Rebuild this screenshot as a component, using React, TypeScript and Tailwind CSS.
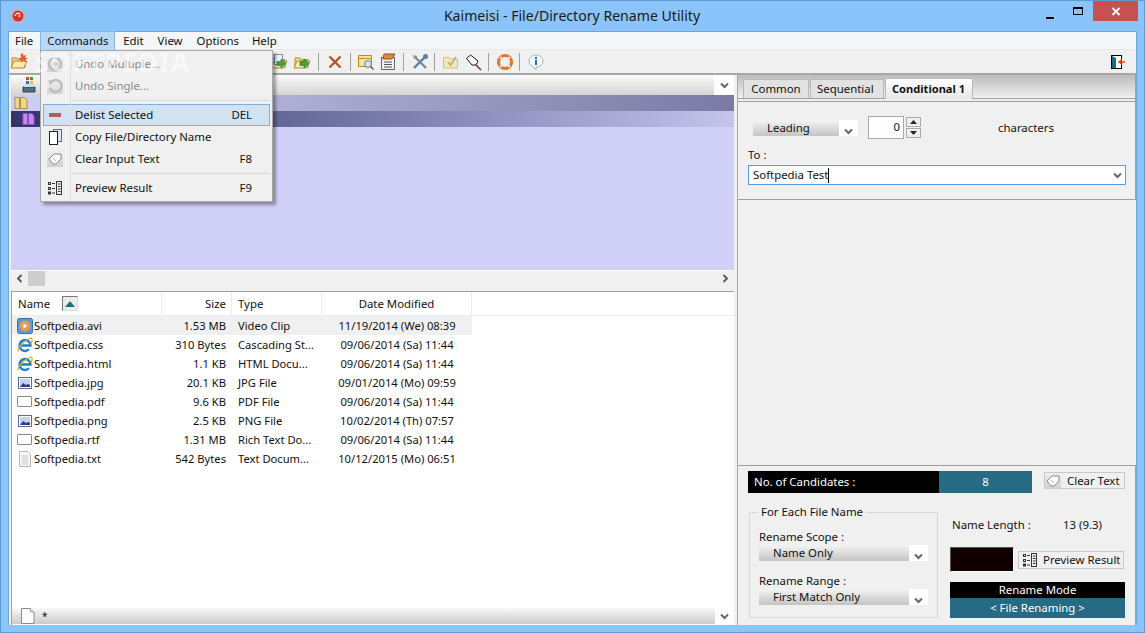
import React from "react";

const F = "font-['Noto_Sans',sans-serif]";

function Chevron({ c = "#666" }: { c?: string }) {
  return (
    <svg width="9" height="7" viewBox="0 0 9 7" className="block">
      <path d="M1 1.500 L4.500 5 L8 1.500" fill="none" stroke={c} strokeWidth="2" />
    </svg>
  );
}

function FolderOpen({ star, arrow, doc }: { star?: boolean; arrow?: boolean; doc?: boolean }) {
  return (
    <svg width="18" height="18" viewBox="0 0 18 18" className="block">
      <path d="M2 5h5l1.500 1.500H15v8H2z" fill="#f4d98a" stroke="#b08a30" />
      <path d="M1 15l3-7h13l-3 7z" fill="#fbe9ae" stroke="#b08a30" />
      {star && <path d="M12.500 0l1 3 3-1.500-1.500 3 3 1-3 1 1 3-3-2-2 2 0-3-3-1 3-1-.5-3z" fill="#ee5a2a" />}
      {doc && <rect x="4.500" y="1.500" width="8" height="10" fill="#eef4fb" stroke="#7e8fa8" />}
      {arrow && <path d="M7 8.500h4V6l5 4.500-5 4.500v-2.500H7z" fill="#3fa535" stroke="#1f6d1c" strokeWidth=".6" />}
    </svg>
  );
}

function Sep({ className }: { className: string }) {
  return <div className={`w-px h-[18px] bg-[#a0a0a0] ${className}`} />;
}

function PreviewIcon() {
  return (
    <svg width="16" height="16" viewBox="0 0 16 16" className="block">
      <g fill="none" stroke="#333">
        <rect x="1.500" y="2.500" width="2" height="2" />
        <rect x="1.500" y="7.500" width="2" height="2" />
        <rect x="1.500" y="12" width="2" height="2" />
        <rect x="9.500" y="1.500" width="5" height="13" fill="#eee" />
      </g>
      <path d="M5 3.500h3M5 8.500h3M5 13h3M11 4h2.500M11 6.500h2.500M11 9h2.500M11 11.500h2.500" stroke="#333" />
    </svg>
  );
}

function EraserIcon() {
  return (
    <span className="flex items-center justify-center w-4 h-4 bg-gradient-to-b from-[#eeeeee] to-[#cfcfcf]">
      <svg width="14" height="12" viewBox="0 0 14 12" className="block">
        <path d="M1 6l5-5h7v5l-5 5H5z" fill="#fbfbfb" stroke="#8a8a8a" />
        <path d="M5 5l3 3" stroke="#b5b5b5" />
      </svg>
    </span>
  );
}

function FileIcon({ kind }: { kind: string }) {
  if (kind === "avi")
    return (
      <svg width="16" height="16" viewBox="0 0 16 16" className="block">
        <rect x=".5" y=".5" width="15" height="15" rx="2" fill="#5a9bd5" stroke="#3a6ea5" />
        <circle cx="8" cy="8" r="5.500" fill="#e39a52" />
        <path d="M6.500 5.500l4 2.500-4 2.500z" fill="#fff" />
      </svg>
    );
  if (kind === "ie")
    return (
      <svg width="16" height="16" viewBox="0 0 16 16" className="block">
        <path d="M3.500 8.500h10a5.500 5.500 0 1 0-1.500 3.800" fill="none" stroke="#1d7ed6" strokeWidth="2.400" />
        <path d="M1 14.500C1 9 8 3 14 1c2 1 1 4-.5 6" fill="none" stroke="#e8a91c" strokeWidth="1.300" />
      </svg>
    );
  if (kind === "img")
    return (
      <svg width="16" height="16" viewBox="0 0 16 16" className="block">
        <rect x="1.500" y="2.500" width="13" height="11" fill="#fff" stroke="#5c6c8a" />
        <rect x="3" y="4" width="10" height="8" fill="#c7d3ec" />
        <path d="M3 12l3-4 3 2 2-1 2 1v2z" fill="#2f3f86" />
      </svg>
    );
  if (kind === "txt")
    return (
      <svg width="16" height="16" viewBox="0 0 16 16" className="block">
        <path d="M2.500.5h8l3 3v12h-11z" fill="#fafafa" stroke="#b5b5b5" />
        <path d="M4.500 5h7M4.500 7h7M4.500 9h7M4.500 11h7M4.500 13h7" stroke="#c8c8c8" />
      </svg>
    );
  return <div className="w-[15px] h-[11px] bg-white border border-[#8a8a8a] rounded-[1px]" />;
}

const files = [
  ["avi", "Softpedia.avi", "1.53 MB", "Video Clip", "11/19/2014 (We) 08:39"],
  ["ie", "Softpedia.css", "310 Bytes", "Cascading St...", "09/06/2014 (Sa) 11:44"],
  ["ie", "Softpedia.html", "1.1 KB", "HTML Docu...", "09/06/2014 (Sa) 11:44"],
  ["img", "Softpedia.jpg", "20.1 KB", "JPG File", "09/01/2014 (Mo) 09:59"],
  ["blank", "Softpedia.pdf", "9.6 KB", "PDF File", "09/06/2014 (Sa) 11:44"],
  ["img", "Softpedia.png", "2.5 KB", "PNG File", "10/02/2014 (Th) 07:57"],
  ["blank", "Softpedia.rtf", "1.31 MB", "Rich Text Do...", "09/06/2014 (Sa) 11:44"],
  ["txt", "Softpedia.txt", "542 Bytes", "Text Docum...", "10/12/2015 (Mo) 06:51"],
];

function Combo({ label, w }: { label: string; w: string }) {
  return (
    <div className={`flex h-4 bg-white shrink-0 ${w}`}>
      <div className="flex-1 bg-gradient-to-b from-[#f4f4f4] to-[#c4c4c4] pl-[14px] leading-[15px]">{label}</div>
      <div className="w-[19px] flex items-end justify-center pb-[1px]"><Chevron /></div>
    </div>
  );
}

function MenuRow({ icon, label, key2, disabled, active }: { icon: React.ReactNode; label: string; key2?: string; disabled?: boolean; active?: boolean }) {
  return (
    <div className={`flex items-center h-[22px] pr-[17px] ${active ? "bg-[#d1e2f2] border border-[#7db0e0] mx-[2px]" : "mx-[3px]"}`}>
      <div className="flex items-center justify-center shrink-0 w-[22px]">{icon}</div>
      <div className={`ml-[9px] flex-1 ${disabled ? "text-[#8a8a8a]" : "text-[#111]"}`}>{label}</div>
      {key2 && <div className="text-[#111]">{key2}</div>}
    </div>
  );
}

export default function App() {
  return (
    <div className={`${F} w-[1145px] h-[633px] overflow-hidden relative bg-[#8ac4fa] border border-[#5f9bd0] text-[11.4px] text-[#111] flex flex-col`}>
      {/* title bar */}
      <div className="h-[30px] shrink-0 flex items-center">
        <svg width="16" height="16" viewBox="0 0 16 16" className="ml-[9px] block">
          <circle cx="8" cy="8" r="7.500" fill="#bbb" />
          <circle cx="8" cy="8" r="5.500" fill="#d9322e" />
          <path d="M5 8a3 3 0 0 1 5-2M11 8H8" stroke="#fff" strokeWidth="1.200" fill="none" />
        </svg>
        <div className="flex-1 text-center text-[14.1px] text-[#1a1a1a] pl-[81px]">Kaimeisi - File/Directory Rename Utility</div>
        <div className="flex items-start self-start mr-[6px]">
          <div className="w-[26px] h-[20px] flex items-end justify-center pb-[2px]"><div className="w-2 h-[2px] bg-black" /></div>
          <div className="w-[30px] h-[20px] flex items-center justify-center"><div className="w-[10px] h-2 border border-black border-t-2" /></div>
          <div className="w-[45px] h-[20px] bg-[#c75050] flex items-center justify-center">
            <svg width="10" height="9" viewBox="0 0 10 9"><path d="M1.500 1l7 7M8.500 1l-7 7" stroke="#fff" strokeWidth="1.800" /></svg>
          </div>
        </div>
      </div>

      {/* client */}
      <div className="mx-[7px] flex-1 bg-[#f0f0f0] border border-[#6ea6d8] border-b-0 flex flex-col min-h-0">
        {/* menu */}
        <div className="h-[18px] shrink-0 bg-[#f5f6f7] border-b border-[#e8e8e8] flex items-center text-[#111]">
          <div className="pl-[6px] pr-[7px]">File</div>
          <div className="px-[6px] h-[19px] leading-[18px] bg-[#b9d8f5] border border-[#83b7e6] border-b-0 w-[75px] text-center whitespace-nowrap relative top-[-0.5px]">Commands</div>
          <div className="pl-[8px] pr-[7px]">Edit</div>
          <div className="pl-[7px] pr-[5px]">View</div>
          <div className="pl-[9px] pr-[7px]">Options</div>
          <div className="pl-[6px]">Help</div>
        </div>
        {/* toolbar */}
        <div className="h-[25px] shrink-0 flex items-center pl-[1px] border-b-2 border-[#a8a8a8]">
          <FolderOpen star />
          <div className="w-[242px]" />
          <FolderOpen doc arrow />
          <div className="w-[5px]" />
          <FolderOpen arrow />
          <Sep className="ml-[7px] mr-[7px]" />
          <svg width="16" height="16" viewBox="0 0 16 16" className="block ml-[1px]"><path d="M2.500 2.500l11 11M13.500 2.500l-11 11" stroke="#b5532a" strokeWidth="2.400" /></svg>
          <Sep className="ml-[7px] mr-[6px]" />
          <svg width="18" height="18" viewBox="0 0 18 18" className="block"><path d="M1.500 2.500h13v11h-13z" fill="#fbe3a0" stroke="#c08a20" /><path d="M1.500 5.500h13" stroke="#c08a20" /><circle cx="11" cy="11" r="3.500" fill="#cfe3f4" stroke="#5a7fa5" /><path d="M13.500 13.500l3 3" stroke="#a0522d" strokeWidth="1.600" /></svg>
          <div className="w-[5px]" />
          <svg width="18" height="18" viewBox="0 0 18 18" className="block"><rect x="1.500" y="4.500" width="13" height="12" fill="#f2f2f2" stroke="#666" /><path d="M4 1h11l-3 5H3z" fill="#d98a3a" stroke="#8f5520" /><path d="M4 9h8M4 11.500h8M4 14h8" stroke="#556" /></svg>
          <Sep className="ml-[5px] mr-[7px]" />
          <svg width="18" height="18" viewBox="0 0 18 18" className="block"><path d="M3 15L14 4" stroke="#5f7fa0" strokeWidth="2.400" /><path d="M15 15L5 5" stroke="#7d8b99" strokeWidth="2.400" /><path d="M2 2l4 1 0 3-3 0z" fill="#8a97a5" /><circle cx="14.500" cy="3.500" r="2.500" fill="#5f7fa0" /></svg>
          <Sep className="ml-[5px] mr-[7px]" />
          <svg width="18" height="18" viewBox="0 0 18 18" className="block"><path d="M1.500 4.500h5l1 1.500h8v9h-14z" fill="#f6e7b8" stroke="#d6bf80" /><path d="M6 9l2.500 3L14 4" fill="none" stroke="#b3b08a" strokeWidth="1.800" /></svg>
          <div className="w-[5px]" />
          <svg width="18" height="18" viewBox="0 0 18 18" className="block"><path d="M1.500 5.500L5.500 2l7.500 6-2 4-4 0z" fill="#fff" stroke="#111" /><path d="M11 12l5 5" stroke="#7a3b1a" strokeWidth="1.600" /></svg>
          <Sep className="ml-[5px] mr-[7px]" />
          <svg width="18" height="18" viewBox="0 0 18 18" className="block"><circle cx="9" cy="9" r="6.500" fill="none" stroke="#e8762a" strokeWidth="3.200" /><path d="M4 4l2.500 2.500M14 4l-2.500 2.500M4 14l2.500-2.500M14 14l-2.500-2.500" stroke="#e6eef5" strokeWidth="2" /></svg>
          <Sep className="ml-[5px] mr-[7px]" />
          <svg width="18" height="18" viewBox="0 0 18 18" className="block"><path d="M9 2c4 0 7 2.500 7 6s-3 6-7 6l0 3-3-3.500C3.500 12.500 2 10.500 2 8c0-3.500 3-6 7-6z" fill="#f6f8fa" stroke="#a8b4c0" /><circle cx="9" cy="5" r="1.200" fill="#2a6fc0" /><rect x="8" y="7" width="2" height="5" fill="#2a6fc0" /></svg>
          <div className="flex-1" />
          <svg width="16" height="16" viewBox="0 0 16 16" className="block mr-[10px]"><rect x="1.500" y="1.500" width="10" height="13" fill="#fff" stroke="#000" /><path d="M2 2l4 2v10H2z" fill="#1e6a8a" /><path d="M15 8H9.500M12 5.500L9 8l3 2.500" stroke="#e04a1a" strokeWidth="1.500" fill="none" /></svg>
        </div>

        {/* body */}
        <div className="flex-1 flex min-h-0">
          {/* left */}
          <div className="w-[728px] shrink-0 flex flex-col pl-[2px] pr-[3px]">
            {/* tree */}
            <div className="h-[20px] shrink-0 bg-gradient-to-b from-[#fbfbfb] to-[#d4d4d4] flex items-center pl-[9px]">
              <svg width="18" height="18" viewBox="0 0 18 18" className="block"><path d="M3 11h12v5H3z" fill="#4c6f86" stroke="#2a4456" /><rect x="4" y="8" width="10" height="3" fill="#d8dde0" /><rect x="6" y="1" width="3" height="3" fill="#e0452a" /><rect x="10" y="1" width="3" height="3" fill="#3fa535" /><rect x="6" y="5" width="3" height="3" fill="#2a6fc0" /><rect x="10" y="5" width="3" height="3" fill="#f0c020" /></svg>
              <div className="flex-1" />
              <div className="w-[20px] h-[20px] bg-white flex items-center justify-center"><Chevron /></div>
            </div>
            <div className="h-[175px] shrink-0 bg-[#d0d0f8] flex flex-col">
              <div className="h-[16px] bg-gradient-to-r from-[#d0d0f4] to-[#7a7aa4] flex items-center pl-[3px]">
                <svg width="14" height="14" viewBox="0 0 15 14" className="block"><path d="M1 1h5v12H1zM7 1h4l3 3v9H7z" fill="#f0d88a" stroke="#a08a40" /></svg>
              </div>
              <div className="h-[16px] bg-gradient-to-r from-[#34346a] to-[#c4c4ec] flex items-center pl-[11px]">
                <svg width="13" height="14" viewBox="0 0 14 14" className="block"><path d="M1 1h5v12H1zM7 1h4l2 3v9H7z" fill="#c58af0" stroke="#8a50c0" /></svg>
              </div>
            </div>
            {/* h scroll */}
            <div className="h-[16px] shrink-0 flex items-center bg-[#f0f0f0] border-t border-white">
              <div className="w-[17px] flex justify-center"><svg width="7" height="9" viewBox="0 0 7 9"><path d="M5.500 1L2 4.500 5.500 8" fill="none" stroke="#555" strokeWidth="1.800" /></svg></div>
              <div className="w-[17px] h-[15px] bg-[#cdcdcd]" />
              <div className="flex-1" />
              <div className="w-[17px] flex justify-center"><svg width="7" height="9" viewBox="0 0 7 9"><path d="M1.500 1L5 4.500 1.500 8" fill="none" stroke="#555" strokeWidth="1.800" /></svg></div>
            </div>
            <div className="h-[5px] shrink-0" />
            {/* list */}
            <div className="flex-1 min-h-0 bg-white border-t border-l border-[#a0a0a0] pb-px flex flex-col">
              <div className="h-[24px] shrink-0 flex border-b border-[#e6eefa] items-center">
                <div className="w-[150px] h-full border-r border-[#e6eefa] flex items-center pl-[6px]">
                  <span className="w-[44px]">Name</span>
                  <span className="w-[16px] h-[15px] border border-[#777] border-r-[#ddd] border-b-[#ddd] bg-[#ececec] flex items-center justify-center">
                    <svg width="10" height="6" viewBox="0 0 10 6"><path d="M5 0l5 6H0z" fill="#0f7a78" /></svg>
                  </span>
                </div>
                <div className="w-[70px] h-full border-r border-[#e6eefa] flex items-center justify-end pr-[5px]">Size</div>
                <div className="w-[90px] h-full border-r border-[#e6eefa] flex items-center pl-[6px]">Type</div>
                <div className="w-[150px] h-full border-r border-[#e6eefa] flex items-center justify-center">Date Modified</div>
              </div>
              <div className="flex-1 min-h-0 text-[11.2px]">
                {files.map((f, i) => (
                  <div key={f[1]} className={`w-[460px] h-[19px] flex items-center pt-[1px] ${i === 0 ? "bg-[#f0f0f0]" : ""}`}>
                    <div className="w-[150px] flex items-center pl-[5px]">
                      <div className="w-[17px] flex items-center"><FileIcon kind={f[0]} /></div>
                      <span>{f[1]}</span>
                    </div>
                    <div className="w-[70px] text-right pr-[6px]">{f[2]}</div>
                    <div className="w-[90px] pl-[6px] whitespace-nowrap">{f[3]}</div>
                    <div className="w-[150px] text-center whitespace-nowrap">{f[4]}</div>
                  </div>
                ))}
              </div>
              <div className="h-[16px] shrink-0 flex items-center">
                <div className="flex-1 h-full bg-gradient-to-b from-[#f8f8f8] to-[#cccccc] flex items-center pl-[9px]">
                  <svg width="14" height="16" viewBox="0 0 14 16" className="block"><path d="M.5.500h9l3.500 3.500v11.500h-12.500z" fill="#fdfdfd" stroke="#8a8a8a" /><path d="M9.500.5v3.500h3.500" fill="#ddd" stroke="#aaa" /></svg>
                  <span className="ml-[7px] text-[10px]">*</span>
                </div>
                <div className="w-[19px] flex justify-center"><Chevron /></div>
              </div>
            </div>
          </div>

          {/* right */}
          <div className="flex-1 min-w-0 flex flex-col border-l border-[#a8a8a8]">
            <div className="h-[125px] shrink-0 border-b border-r border-[#a0a0a0] flex flex-col">
              <div className="h-[24px] shrink-0 bg-gradient-to-b from-[#bcbcbc] to-[#f0f0f0] border-b border-[#a0a0a0] flex items-end pl-[5px]">
                <div className="h-[19px] w-[66px] border border-b-0 border-[#b8b8b8] bg-[#e2e2e2] text-center leading-[18px] rounded-t-[2px] whitespace-nowrap">Common</div>
                <div className="h-[19px] w-[74px] ml-px border border-b-0 border-[#b8b8b8] bg-[#e2e2e2] pl-[6px] leading-[18px] rounded-t-[2px] whitespace-nowrap">Sequential</div>
                <div className="h-[21px] w-[88px] ml-px border border-[#b8b8b8] border-b-0 bg-gradient-to-b from-[#ffffff] to-[#e8e8e8] pl-[6px] font-bold leading-[19px] rounded-t-[2px] text-[11.1px] relative top-px whitespace-nowrap">Conditional 1</div>
              </div>
              <div className="flex-1 relative pl-[10px] pr-[9px] pt-[17px] flex flex-col">
                <div className="absolute left-0 right-0 top-[2px] h-px bg-[#a0a0a0]" />
                <div className="flex items-center">
                  <div className="ml-[5px]"><Combo label="Leading" w="w-[105px]" /></div>
                  <div className="w-[36px] h-[23px] ml-[10px] bg-white border border-[#aaa] text-right pr-[3px] leading-[19px]">0</div>
                  <div className="ml-[2px] w-[15px] flex flex-col gap-[1px]">
                    <div className="h-[10px] border border-[#aaa] bg-[#f0f0f0] flex items-center justify-center"><svg width="7" height="4" viewBox="0 0 7 4"><path d="M3.500 0L7 4H0z" fill="#222" /></svg></div>
                    <div className="h-[10px] border border-[#aaa] bg-[#f0f0f0] flex items-center justify-center"><svg width="7" height="4" viewBox="0 0 7 4"><path d="M3.500 4L7 0H0z" fill="#222" /></svg></div>
                  </div>
                  <div className="ml-[77px]">characters</div>
                </div>
                <div className="mt-[7px] h-[17px] leading-[17px]">To :</div>
                <div className="mt-[2px] h-[20px] bg-white border border-[#569de5] flex items-center pl-[4px] pr-[3px]">
                  <span>Softpedia Test</span>
                  <div className="w-px h-[15px] bg-black" />
                  <div className="flex-1" />
                  <Chevron />
                </div>
              </div>
            </div>
            <div className="flex-1 min-h-0" />
            <div className="h-[160px] shrink-0 border-t border-r border-[#a0a0a0] pl-[10px] pt-[5px]">
              <div className="flex items-start">
                <div className="w-[284px] h-[22px] flex">
                  <div className="w-[191px] bg-black text-white pl-[6px] leading-[21px]">No. of Candidates :</div>
                  <div className="flex-1 bg-[#276a84] text-white text-center leading-[21px]">8</div>
                </div>
                <div className="ml-[12px] w-[81px] h-[17px] mt-[1px] bg-[#f0f0f0] border border-[#c8c8c8] flex items-center whitespace-nowrap">
                  <EraserIcon />
                  <span className="ml-[6px]">Clear Text</span>
                </div>
              </div>
              <div className="flex mt-[18px]">
                <div className="w-[189px] ml-[1px]">
                  <fieldset className="border border-[#d8d8d8] h-[114px] px-[9px] mt-[-7px]">
                    <legend className="px-[3px] leading-[16px] ml-[-1px]">For Each File Name</legend>
                    <div className="mt-[9px] leading-[16px]">Rename Scope :</div>
                    <Combo label="Name Only" w="w-[169px]" />
                    <div className="mt-[12px] leading-[16px]">Rename Range :</div>
                    <Combo label="First Match Only" w="w-[169px]" />
                  </fieldset>
                </div>
                <div className="ml-[12px] flex flex-col flex-1 min-w-0">
                  <div className="flex mt-[5px] pl-[2px] h-[18px] leading-[18px]">
                    <span className="w-[111px]">Name Length :</span>
                    <span>13 (9.3)</span>
                  </div>
                  <div className="flex items-center mt-[13px]">
                    <div className="w-[64px] h-[25px] bg-[#100000] border border-[#555] border-r-white border-b-white" />
                    <div className="ml-[4px] w-[106px] h-[18px] bg-[#f0f0f0] border border-[#c8c8c8] flex items-center pl-[3px] whitespace-nowrap">
                      <PreviewIcon />
                      <span className="ml-[5px]">Preview Result</span>
                    </div>
                  </div>
                  <div className="mt-[10px] w-[175px] h-[36px] flex flex-col">
                    <div className="h-[16px] bg-black text-white text-center leading-[16px]">Rename Mode</div>
                    <div className="h-[20px] bg-[#276a84] text-white text-center leading-[19px]">&lt; File Renaming &gt;</div>
                  </div>
                </div>
              </div>
            </div>
          </div>
        </div>
      </div>
      <div className="h-[7px] shrink-0" />

      {/* dropdown menu */}
      <div className="absolute left-[39px] top-[49px] w-[233px] h-[152px] bg-[#f0f0f0] border border-[#a8a8a8] shadow-[3px_3px_3px_rgba(0,0,0,0.35)] pt-[2px] z-10">
        <div className="absolute left-[29px] top-0 bottom-0 w-px bg-[#e0e0e0]" />
        <MenuRow disabled label="Undo Multiple..." icon={<span className="w-4 h-4 flex items-center justify-center bg-gradient-to-b from-[#f4f4f4] to-[#d4d4d4]"><svg width="16" height="16" viewBox="0 0 16 16"><circle cx="8" cy="8" r="6" fill="none" stroke="#bdbdbd" strokeWidth="2.500" /><path d="M5 8h6M8 5v6" stroke="#9a9a9a" /></svg></span>} />
        <MenuRow disabled label="Undo Single..." icon={<span className="w-4 h-4 flex items-center justify-center bg-gradient-to-b from-[#f4f4f4] to-[#d4d4d4]"><svg width="16" height="16" viewBox="0 0 16 16"><path d="M3 6a6 6 0 1 1 0 4" fill="none" stroke="#bdbdbd" strokeWidth="2.500" /><path d="M1 2l5 1-2 4z" fill="#bdbdbd" /></svg></span>} />
        <div className="h-px bg-[#d8d8d8] ml-[31px] mr-[2px] my-[3px]" />
        <MenuRow active label="Delist Selected" key2="DEL" icon={<div className="w-[12px] h-[4px] bg-[#b25a62]" />} />
        <MenuRow label="Copy File/Directory Name" icon={<svg width="13" height="16" viewBox="0 0 13 16"><rect x="4.500" y=".5" width="8" height="12" fill="#dfe8f2" stroke="#667" /><rect x=".5" y="2.500" width="8" height="13" fill="#fff" stroke="#222" /></svg>} />
        <MenuRow label="Clear Input Text" key2="F8" icon={<EraserIcon />} />
        <div className="h-px bg-[#d8d8d8] ml-[31px] mr-[2px] my-[3px]" />
        <MenuRow label="Preview Result" key2="F9" icon={<PreviewIcon />} />
      </div>

      {/* watermark */}
      <div className="absolute left-[33px] top-[50px] z-20 pointer-events-none text-[27px] leading-[22px] font-bold tracking-[1px] text-white/50 whitespace-nowrap">SOFTPEDIA</div>
    </div>
  );
}
